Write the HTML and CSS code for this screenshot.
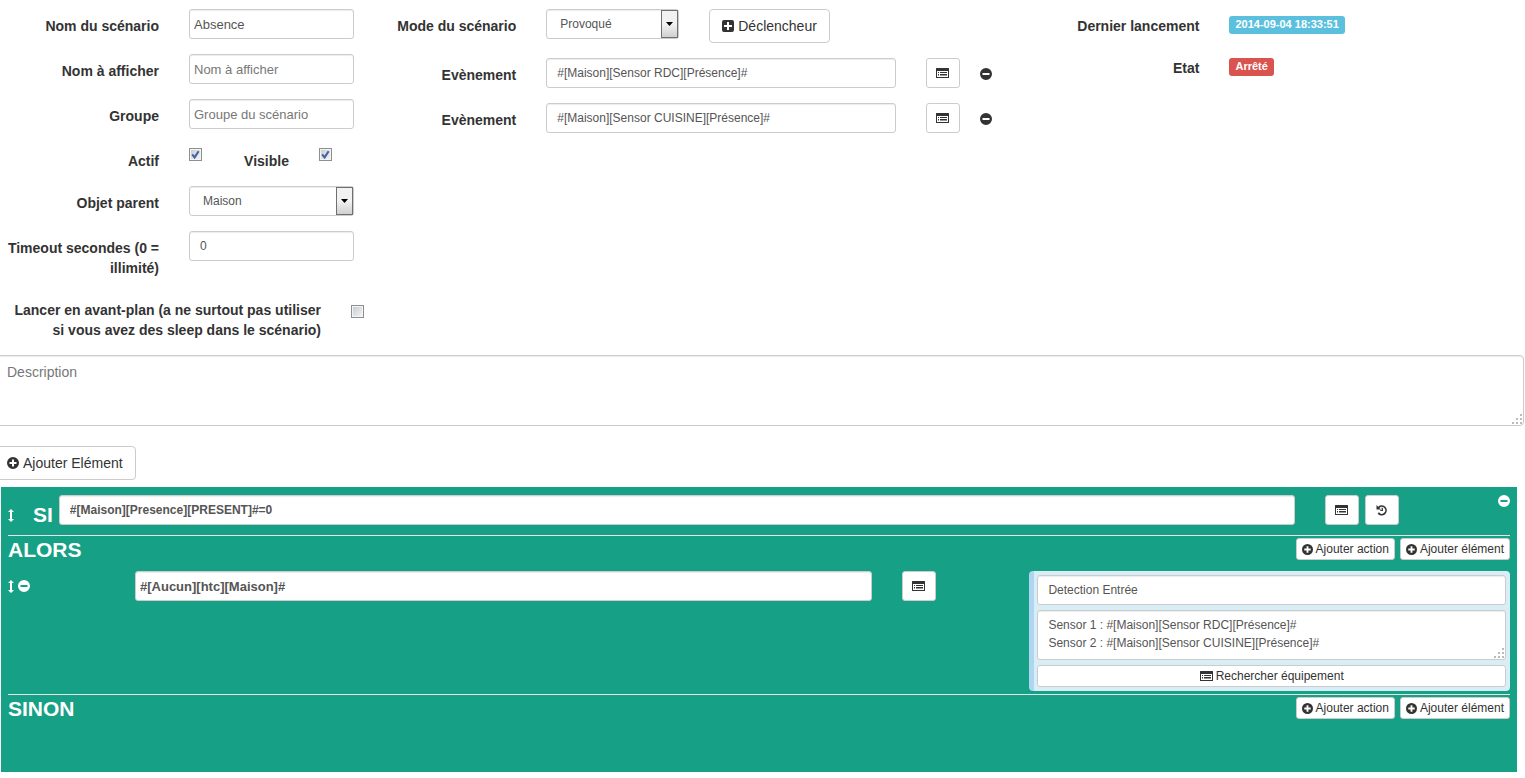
FILE: index.html
```html
<!DOCTYPE html>
<html lang="fr">
<head>
<meta charset="utf-8">
<title>Scénario</title>
<link rel="stylesheet" href="styles.css">
</head>
<body>
<svg class="sprite" aria-hidden="true">
  <symbol id="plus-circle" viewBox="0 0 12 12"><path fill-rule="evenodd" d="M6 0a6 6 0 1 1 0 12A6 6 0 0 1 6 0zM5 2.500V5H2.500v2H5v2.500h2V7h2.500V5H7V2.500z"/></symbol>
  <symbol id="minus-circle" viewBox="0 0 12 12"><path fill-rule="evenodd" d="M6 0a6 6 0 1 1 0 12A6 6 0 0 1 6 0zM2.500 5v2h7V5z"/></symbol>
  <symbol id="plus-square" viewBox="0 0 12 12"><path fill-rule="evenodd" d="M2 0h8a2 2 0 0 1 2 2v8a2 2 0 0 1-2 2H2a2 2 0 0 1-2-2V2a2 2 0 0 1 2-2zM5 2v3H2v2h3v3h2V7h3V5H7V2z"/></symbol>
  <symbol id="list-alt" viewBox="0 0 13 10"><path fill-rule="evenodd" d="M.5 0h12a.5.5 0 0 1 .5.5v9a.5.5 0 0 1-.5.5H.5a.5.5 0 0 1-.5-.5v-9A.5.5 0 0 1 .5 0zM1 3v6h11V3z"/><path d="M2 4h1v1H2zM4 4h7v1H4zM2 6h1v1.500H2zM4 6h7v1.500H4z"/></symbol>
  <symbol id="history" viewBox="0 0 12 12"><path d="M0.500 1v4.500H5L3.400 3.900A3.400 3.400 0 1 1 3 8.300L1.600 9.400A5.100 5.100 0 1 0 2.200 2.700z"/><path d="M5.600 3.700h1.300v3.400H4.300V6h1.300z"/></symbol>
  <symbol id="sort" viewBox="0 0 6 13"><path d="M3 0l3 3H4v7h2l-3 3-3-3h2V3H0z"/></symbol>
  <symbol id="tick" viewBox="0 0 13 13"><path d="M3.200 6.300L5.600 9.400 9.600 3.200" fill="none" stroke="#44609f" stroke-width="2"/></symbol>
  <symbol id="caret" viewBox="0 0 7 4"><path d="M0 0h7L3.500 4z"/></symbol>
  <symbol id="grip" viewBox="0 0 12 12"><path d="M9 1h2v2H9zM5 5h2v2H5zM9 5h2v2H9zM1 9h2v2H1zM5 9h2v2H5zM9 9h2v2H9z"/></symbol>
</svg>

<main class="page">
  <form class="settings">
    <section class="identity">
      <div class="row"><label class="caption" for="name">Nom du scénario</label><input class="field snug" id="name" type="text" value="Absence"></div>
      <div class="row"><label class="caption" for="shown">Nom à afficher</label><input class="field snug" id="shown" type="text" placeholder="Nom à afficher"></div>
      <div class="row"><label class="caption" for="group">Groupe</label><input class="field snug" id="group" type="text" placeholder="Groupe du scénario"></div>
      <div class="row">
        <label class="caption" for="active">Actif</label>
        <span class="tickbox"><input id="active" type="checkbox" checked><svg><use href="#tick"/></svg></span>
        <label class="caption visible" for="visible">Visible</label>
        <span class="tickbox"><input id="visible" type="checkbox" checked><svg><use href="#tick"/></svg></span>
      </div>
      <div class="row"><label class="caption" for="parent">Objet parent</label>
        <span class="picker"><select class="field" id="parent"><option>Maison</option></select><span class="arrow"><svg><use href="#caret"/></svg></span></span></div>
      <div class="row"><label class="caption" for="timeout">Timeout secondes (0 = illimité)</label><input class="field" id="timeout" type="text" value="0"></div>
      <div class="row foreground">
        <label class="caption" for="front">Lancer en avant-plan (a ne surtout pas utiliser si vous avez des sleep dans le scénario)</label>
        <span class="tickbox"><input id="front" type="checkbox"></span>
      </div>
    </section>

    <section class="triggers">
      <div class="row"><label class="caption" for="mode">Mode du scénario</label>
        <span class="picker mode"><select class="field" id="mode"><option>Provoqué</option></select><span class="arrow"><svg><use href="#caret"/></svg></span></span>
        <button class="btn" type="button"><svg class="icon"><use href="#plus-square"/></svg> Déclencheur</button></div>
      <div class="row"><label class="caption" for="ev1">Evènement</label><input class="field" id="ev1" type="text" value="#[Maison][Sensor RDC][Présence]#">
        <button class="btn square" type="button" aria-label="Choisir"><svg class="list"><use href="#list-alt"/></svg></button>
        <button class="bare" type="button" aria-label="Retirer"><svg class="icon"><use href="#minus-circle"/></svg></button></div>
      <div class="row"><label class="caption" for="ev2">Evènement</label><input class="field" id="ev2" type="text" value="#[Maison][Sensor CUISINE][Présence]#">
        <button class="btn square" type="button" aria-label="Choisir"><svg class="list"><use href="#list-alt"/></svg></button>
        <button class="bare" type="button" aria-label="Retirer"><svg class="icon"><use href="#minus-circle"/></svg></button></div>
    </section>

    <section class="status">
      <div class="row"><span class="caption">Dernier lancement</span><span class="badge info">2014-09-04 18:33:51</span></div>
      <div class="row"><span class="caption">Etat</span><span class="badge danger">Arrêté</span></div>
    </section>
  </form>

  <div class="area description"><textarea class="field" aria-label="Description" placeholder="Description"></textarea><svg class="grip"><use href="#grip"/></svg></div>

  <button class="btn add-element" type="button"><svg class="icon"><use href="#plus-circle"/></svg> Ajouter Elément</button>

  <section class="element">
    <div class="condition">
      <svg class="sort"><use href="#sort"/></svg>
      <label class="keyword" for="test">SI</label>
      <input class="field strong" id="test" type="text" value="#[Maison][Presence][PRESENT]#=0">
      <div class="tools">
        <button class="btn square" type="button" aria-label="Choisir"><svg class="list"><use href="#list-alt"/></svg></button>
        <button class="btn square" type="button" aria-label="Historique"><svg class="icon"><use href="#history"/></svg></button>
      </div>
      <button class="bare" type="button" aria-label="Supprimer"><svg class="icon"><use href="#minus-circle"/></svg></button>
    </div>

    <div class="branch">
      <header class="branch-head">
        <h2 class="keyword">ALORS</h2>
        <button class="btn small" type="button"><svg class="icon"><use href="#plus-circle"/></svg> Ajouter action</button>
        <button class="btn small" type="button"><svg class="icon"><use href="#plus-circle"/></svg> Ajouter élément</button>
      </header>
      <div class="action">
        <div class="lead"><svg class="sort"><use href="#sort"/></svg><button class="bare" type="button" aria-label="Supprimer"><svg class="icon"><use href="#minus-circle"/></svg></button></div>
        <input class="field snug strong" type="text" aria-label="Action" value="#[Aucun][htc][Maison]#">
        <button class="btn square" type="button" aria-label="Choisir"><svg class="list"><use href="#list-alt"/></svg></button>
        <div class="options">
          <input class="field" type="text" aria-label="Titre" value="Detection Entrée">
          <div class="area"><textarea class="field" aria-label="Message">Sensor 1 : #[Maison][Sensor RDC][Présence]#
Sensor 2 : #[Maison][Sensor CUISINE][Présence]#</textarea><svg class="grip"><use href="#grip"/></svg></div>
          <button class="btn small" type="button"><svg class="list"><use href="#list-alt"/></svg> Rechercher équipement</button>
        </div>
      </div>
    </div>

    <div class="branch">
      <header class="branch-head">
        <h2 class="keyword">SINON</h2>
        <button class="btn small" type="button"><svg class="icon"><use href="#plus-circle"/></svg> Ajouter action</button>
        <button class="btn small" type="button"><svg class="icon"><use href="#plus-circle"/></svg> Ajouter élément</button>
      </header>
    </div>
  </section>
</main>
</body>
</html>
```
FILE: styles.css
```css
* { box-sizing: border-box; }
body { margin: 0; background: #fff; color: #333; font: 14px/20px "Liberation Sans", Arial, sans-serif; overflow-x: hidden; }
button, input, select, textarea { font-family: inherit; margin: 0; }
svg { display: block; flex: none; fill: currentColor; }
.sprite { display: none; }
.icon { width: 12px; height: 12px; }
.list { width: 13px; height: 10px; }
.sort { width: 6px; height: 13px; }
.page { padding-top: 9px; overflow: hidden; }

.settings { display: grid; grid-template-columns: 4fr 7fr 5fr; margin-bottom: 15px; }
.row { display: flex; align-items: flex-start; margin-bottom: 15px; }
.identity .row:last-child { margin-bottom: 0; }
.caption { flex: none; padding-top: 7px; margin-right: 30px; text-align: right; font-weight: bold; }
.identity .caption { width: 159px; }
.triggers .caption { width: 135px; }
.status .caption { width: 151px; }
.identity .visible { width: 87px; }
.identity .foreground .caption { width: 321px; padding-left: 6px; }

.field { display: block; width: 100%; height: 30px; padding: 4px 10px 5px; border: 1px solid #ccc; border-radius: 3px; background: #fff; box-shadow: inset 0 1px 1px rgba(0, 0, 0, .075); color: #555; font-size: 12px; line-height: 18px; outline: 0; }
.field.snug { padding: 4px; font-size: 13px; }
.field::placeholder { color: #777; opacity: 1; }
.strong { font-weight: bold; }
.identity .field, .identity .picker { width: 165px; }
.triggers input.field { width: 350px; }

.picker { position: relative; flex: none; }
.picker.mode { width: 133px; }
.picker select { appearance: none; padding-left: 13px; }
.arrow { position: absolute; top: 1px; right: 1px; display: grid; place-items: center; width: 17px; height: 28px; border: 1px solid #707070; background: linear-gradient(#f2f2f2 50%, #d0d0d0); color: #000; pointer-events: none; }
.arrow svg { width: 7px; height: 4px; }

.tickbox { position: relative; width: 13px; height: 13px; margin-top: 4px; flex: none; }
.foreground .tickbox { margin-top: 12px; }
.tickbox input { appearance: none; display: block; width: 13px; height: 13px; border: 1px solid #8e8f8f; background: linear-gradient(135deg, #c4c9d0, #f6f6f6); box-shadow: inset 0 0 0 1px #f4f4f4; }
.tickbox svg { position: absolute; inset: 0; width: 13px; height: 13px; pointer-events: none; }

.btn { display: flex; flex: none; align-items: center; justify-content: center; gap: 4px; height: 34px; padding: 0 12px; border: 1px solid #ccc; border-radius: 4px; background: #fff; color: #333; font-size: 14px; line-height: 20px; white-space: nowrap; }
.btn.square { width: 34px; height: 30px; padding: 0 1px 0 0; border-radius: 3px; }
.btn.small { gap: 3px; height: 22px; padding: 0 5px; border-radius: 3px; font-size: 12px; line-height: 18px; }
.small .icon { width: 11px; height: 11px; }
.bare { flex: none; padding: 0; border: 0; background: none; color: inherit; }
.triggers .btn { margin-left: 30px; }
.triggers .bare { margin: 10px 0 0 20px; }

.badge { margin-top: 7px; height: 18px; padding: 0 6px; border-radius: 3px; color: #fff; font-size: 11px; font-weight: bold; line-height: 17px; }
.info { background: #5bc0de; }
.danger { background: #d9534f; }

.area { position: relative; }
.area textarea { resize: none; overflow: hidden; }
.grip { position: absolute; right: 1px; bottom: 1px; width: 12px; height: 12px; color: #bbb; }
.description { margin: 0 1px 20px -6px; }
.description .field { height: 71px; padding: 6px 12px; border-radius: 4px; font-size: 14px; line-height: 20px; }
.add-element { margin: 0 0 7px -6px; }

.element { margin: 0 8px 0 1px; padding: 8px 7px 51px; background: #16a085; color: #fff; }
.keyword { margin: 0; font-size: 21px; font-weight: bold; line-height: 24px; }
.condition { display: flex; align-items: flex-start; }
.condition .sort { margin-top: 14px; }
.condition .keyword { margin: 8px 6px 0 19px; }
.condition .field { flex: 1; }
.tools { display: flex; gap: 6px; margin: 0 99px 0 30px; }
.branch { margin-top: 8px; border-top: 1px solid #e5e5e5; }
.branch + .branch { margin-top: 3px; }
.branch-head { display: flex; gap: 5px; padding-top: 2px; }
.branch-head .keyword { margin-right: auto; }
.action { display: flex; align-items: flex-start; margin-top: 9px; }
.lead { display: flex; flex: none; align-items: center; gap: 4px; width: 127px; height: 30px; }
.action > .field { flex: 1; }
.action > .btn { margin: 0 93px 0 30px; }
.options { display: grid; gap: 5px; width: 32%; padding: 4px 4px 4px 3px; border-left: 5px solid #afd5f0; border-radius: 4px; background: #d9edf7; }
.options textarea { height: 50px; padding-top: 5px; }
```
